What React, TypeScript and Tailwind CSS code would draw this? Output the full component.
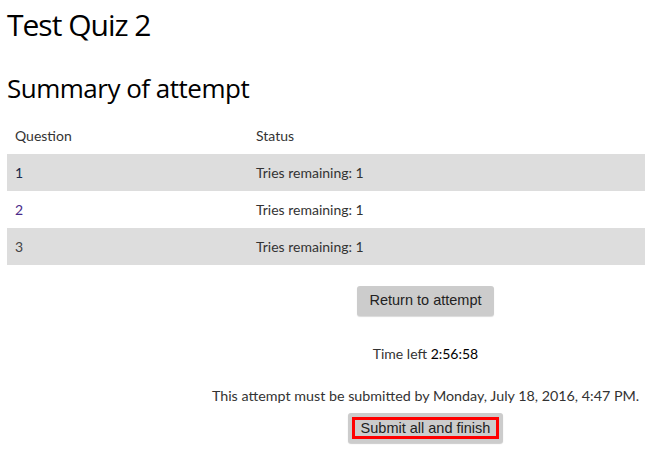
const rows = [
  { n: "1", color: "text-[#1a2a4a]", bg: "bg-[#dddddd]" },
  { n: "2", color: "text-[#4b2a8a]", bg: "bg-white" },
  { n: "3", color: "text-[#444444]", bg: "bg-[#dddddd]" },
];

export default function App() {
  return (
    <div className="w-[645px] h-[453px] overflow-hidden bg-white text-[#333333] font-['Lato','Liberation_Sans',sans-serif]">
      <div className="w-[844px] pl-[7px]">
        <h2 className="text-[30px] leading-[36px] pt-[7px] font-['Open_Sans',sans-serif] tracking-[-1px] text-black">
          Test Quiz 2
        </h2>
        <h3 className="mt-[29px] text-[26px] leading-[32px] font-['Open_Sans',sans-serif] tracking-[-0.5px] text-black">
          Summary of attempt
        </h3>

        <table className="mt-[13px] w-full text-[14px] border-collapse">
          <thead>
            <tr className="h-[37px]">
              <th className="w-[249px] text-left font-normal pl-[8px]">Question</th>
              <th className="text-left font-normal">Status</th>
            </tr>
          </thead>
          <tbody>
            {rows.map((r) => (
              <tr key={r.n} className={`h-[37px] ${r.bg}`}>
                <td className={`pl-[8px] ${r.color}`}>{r.n}</td>
                <td>Tries remaining: 1</td>
              </tr>
            ))}
          </tbody>
        </table>

        <div className="flex flex-col items-center">
          <button className="mt-[21px] h-[30px] px-[12px] rounded-[3px] bg-[#cccccc] shadow-[0_1px_1px_rgba(0,0,0,0.15)] text-[14.5px] text-[#222222] font-['Liberation_Sans',sans-serif]">
            Return to attempt
          </button>
          <div className="mt-[28px] text-[14px] leading-[20px]">
            Time left <span className="text-black">2:56:58</span>
          </div>
          <div className="mt-[22px] text-[14.3px] leading-[20px]">
            This attempt must be submitted by Monday, July 18, 2016, 4:47 PM.
          </div>
          <button className="mt-[7px] h-[30px] p-[4px] rounded-[3px] bg-[#cccccc] shadow-[0_1px_1px_rgba(0,0,0,0.2)] font-['Liberation_Sans',sans-serif]">
            <span className="block border-[3px] border-[#ff0000] px-[6px] h-[22px] leading-[16px] text-[14.5px] text-[#222222]">
              Submit all and finish
            </span>
          </button>
        </div>
      </div>
    </div>
  );
}
